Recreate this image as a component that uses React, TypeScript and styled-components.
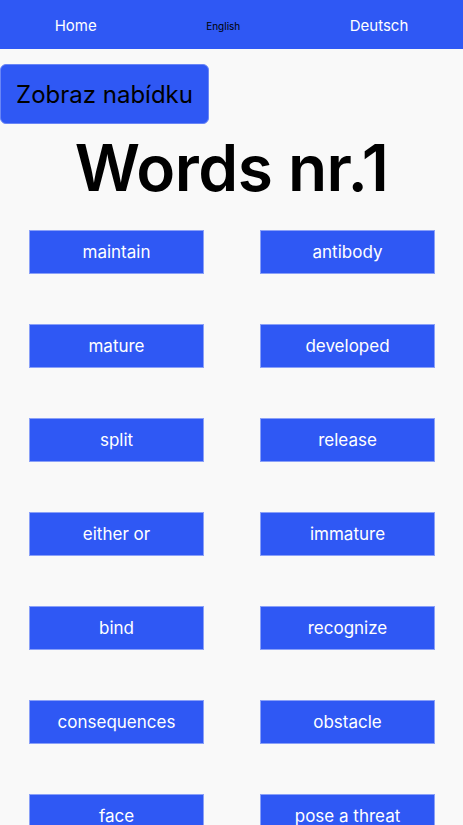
import React from "react";
import styled, { createGlobalStyle } from "styled-components";

const Global = createGlobalStyle`
  html, body { margin: 0; padding: 0; background: #f9f9f9; }
  body { font-family: Inter, "Noto Sans", sans-serif; }
  * { box-sizing: border-box; }
`;

const Nav = styled.nav`
  height: 49px;
  background: #2f58f4;
  display: flex;
  justify-content: space-around;
  align-items: center;
`;

const NavLink = styled.a<{ $small?: boolean }>`
  color: ${(p) => (p.$small ? "#000" : "#fff")};
  font-size: ${(p) => (p.$small ? "10px" : "15px")};
  text-decoration: none;
  font-weight: 400;
  padding-top: 2px;
`;

const Page = styled.main`
  padding-top: 15px;
`;

const MenuButton = styled.button`
  display: block;
  width: 209px;
  height: 60px;
  margin: 0;
  background: #2f58f4;
  border: 1px solid #6a86f6;
  border-radius: 6px;
  color: #000;
  font-family: inherit;
  font-size: 24px;
  font-weight: 400;
  padding: 0;
`;

const Title = styled.h1`
  margin: 4px 0 0;
  text-align: center;
  font-size: 64px;
  font-weight: 600;
  line-height: 80px;
  color: #000;
  letter-spacing: -0.5px;
`;

const Grid = styled.div`
  display: grid;
  grid-template-columns: 1fr 1fr;
  row-gap: 50px;
  margin-top: 22px;
  padding-left: 1px;
  justify-items: center;
`;

const WordButton = styled.button`
  width: 175px;
  height: 44px;
  background: #2f58f4;
  border: 1px solid #8aa0f8;
  color: #fff;
  font-family: inherit;
  font-size: 17px;
  padding: 0;
  margin: 0;
`;

const words = [
  "maintain", "antibody",
  "mature", "developed",
  "split", "release",
  "either or", "immature",
  "bind", "recognize",
  "consequences", "obstacle",
  "face", "pose a threat",
];

export default function App() {
  return (
    <>
      <Global />
      <Nav>
        <NavLink href="#">Home</NavLink>
        <NavLink href="#" $small>English</NavLink>
        <NavLink href="#">Deutsch</NavLink>
      </Nav>
      <Page>
        <MenuButton>Zobraz nabídku</MenuButton>
        <Title>Words nr.1</Title>
        <Grid>
          {words.map((w) => (
            <WordButton key={w}>{w}</WordButton>
          ))}
        </Grid>
      </Page>
    </>
  );
}
